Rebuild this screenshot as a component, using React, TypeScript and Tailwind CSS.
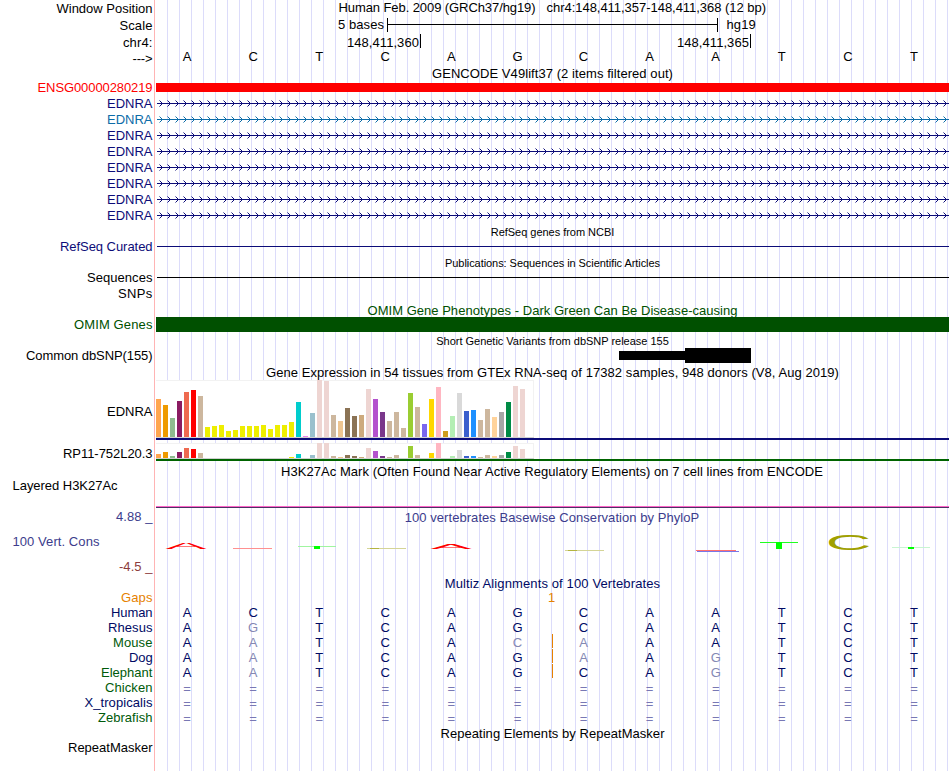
import { useLayoutEffect, useRef, useState } from 'react';
import clsx from 'clsx';

const NAVY = 'text-[#0c0c78]';
const SPECIES_BLUE = 'text-[#000a64]';

interface Label {
    text: string;
    width: number;
    className?: string;
}

// Stretches or tightens the letter spacing until the text takes up `width`
function Fit({ text, width, className }: Label) {
    const ref = useRef<HTMLSpanElement>(null);
    const [spacing, setSpacing] = useState(0);

    useLayoutEffect(() => {
        if (!ref.current) return;
        const natural = ref.current.getBoundingClientRect().width;
        setSpacing((width - natural) / text.length);
    }, []);

    return (
        <span className={clsx('block shrink-0 whitespace-pre', className)}>
            <span ref={ref} style={{ letterSpacing: `${spacing}px` }}>{text}</span>
        </span>
    );
}

const LABELS: Label[] = [
    { text: 'Window Position', width: 96, className: 'mt-px' },
    { text: 'Scale', width: 33, className: 'mt-px' },
    { text: 'chr4:', width: 29.5, className: 'mt-px' },
    { text: '--->', width: 20 },
    { text: 'ENSG00000280219', width: 115, className: 'mt-[13px] text-[#ff0000]' },
    { text: 'EDNRA', width: 45.5, className: NAVY },
    { text: 'EDNRA', width: 45.5, className: 'text-[#0c6ca8]' },
    { text: 'EDNRA', width: 45.5, className: NAVY },
    { text: 'EDNRA', width: 45.5, className: NAVY },
    { text: 'EDNRA', width: 45.5, className: NAVY },
    { text: 'EDNRA', width: 45.5, className: NAVY },
    { text: 'EDNRA', width: 45.5, className: NAVY },
    { text: 'EDNRA', width: 45.5, className: NAVY },
    { text: 'RefSeq Curated', width: 92.5, className: 'mt-[15px] text-[#0c0c78]' },
    { text: 'Sequences', width: 65.5, className: 'mt-[15px]' },
    { text: 'SNPs', width: 34.5 },
    { text: 'OMIM Genes', width: 78.5, className: 'mt-[15px] text-[#005000]' },
    { text: 'Common dbSNP(155)', width: 126.5, className: 'mt-[15px]' },
    { text: 'EDNRA', width: 45.5, className: 'mt-10' },
    { text: 'RP11-752L20.3', width: 89.5, className: 'mt-[26px]' },
    { text: 'Layered H3K27Ac', width: 105, className: 'mt-4 self-start ml-[12.5px]' },
    { text: '4.88 _', width: 36.5, className: 'mt-[15px] text-[#3c3c8c]' },
    { text: '100 Vert. Cons', width: 87, className: 'mt-[9px] self-start ml-[12.5px] text-[#3c3c8c]' },
    { text: '-4.5 _', width: 33.5, className: 'mt-[9px] text-[#8c3c3c]' },
    { text: 'Gaps', width: 31.5, className: 'mt-[15px] h-[15px] text-[#e68200]' },
    { text: 'Human', width: 41.5, className: 'h-[15px] text-[#000a64]' },
    { text: 'Rhesus', width: 44.5, className: 'h-[15px] text-[#000a64]' },
    { text: 'Mouse', width: 39.5, className: 'h-[15px] text-[#005a0a]' },
    { text: 'Dog', width: 23.5, className: 'h-[15px] text-[#000a64]' },
    { text: 'Elephant', width: 51.5, className: 'h-[15px] text-[#005a0a]' },
    { text: 'Chicken', width: 47.5, className: 'h-[15px] text-[#005a0a]' },
    { text: 'X_tropicalis', width: 68, className: 'h-[15px] text-[#000a64]' },
    { text: 'Zebrafish', width: 54.5, className: 'h-[15px] text-[#005a0a]' },
    { text: 'RepeatMasker', width: 84.5, className: 'mt-[15px]' },
];

const TISSUE_COLORS = [
    '#ffa54f', '#ee9a00', '#8fbc8f', '#8b1c62', '#ee6a50', '#ff0000', '#cdb79e',
    ...Array(13).fill('#eeee00'),
    '#00cdcd', '#ee82ee', '#9ac0cd', '#eed5d2', '#eed5d2', '#cdb79e', '#eec591', '#8b7355', '#8b7355',
    '#cdaa7d', '#eed5d2', '#b452cd', '#7a378b', '#cdb79e', '#cdb79e', '#cdb79e', '#9acd32', '#cdb79e',
    '#7a67ee', '#ffd700', '#ffb6c1', '#cd9b1d', '#b4eeb4', '#d9d9d9', '#3a5fcd', '#1e90ff', '#cdb79e',
    '#cdb79e', '#ffd39b', '#a6a6a6', '#008b45', '#eed5d2', '#eed5d2',
];

const EDNRA_EXPRESSION = [
    38, 32, 19, 36, 45, 47, 41, 10, 11, 12, 6, 7, 11, 11, 11, 12, 8, 12, 12, 15, 35, 1, 24, 57, 56, 22, 16,
    29, 21, 22, 48, 38, 25, 16, 25, 9, 44, 30, 13, 38, 50, 6, 21, 44, 26, 27, 17, 28, 20, 25, 35, 51, 48,
];

const RP11_EXPRESSION = [
    4, 6, 2, 6, 10, 9, 5, 0, 0, 0, 0, 0, 0, 0, 0, 0, 0, 0, 0, 1, 4, 0, 3, 15, 15, 2, 1,
    3, 2, 1, 10, 7, 2, 1, 3, 0, 12, 3, 0, 5, 15, 0, 2, 8, 2, 2, 1, 3, 2, 3, 6, 12, 9,
];

// Lower case marks a base that differs from human
const ALIGNMENTS = [
    { bases: 'ACTCAGCAATCT', gap: false },
    { bases: 'AgTCAGCAATCT', gap: false },
    { bases: 'AaTCAcaAATCT', gap: true },
    { bases: 'AaTCAGaAgTCT', gap: true },
    { bases: 'AaTCAGCAgTCT', gap: true },
    { bases: '============', gap: false },
    { bases: '============', gap: false },
    { bases: '============', gap: false },
];

function Title({ text, width, className }: Label) {
    return (
        <div className={clsx('flex justify-center', className)}>
            <Fit text={text} width={width} />
        </div>
    );
}

function Bases({ bases }: { bases: string }) {
    return (
        <div className="-ml-[2px] grid w-[793px] grid-cols-12 text-center">
            {bases.split('').map((base, idx) => (
                <span
                    key={idx}
                    className={clsx(
                        base === '=' && 'pt-px text-[#7878b4]',
                        base !== '=' && base !== base.toUpperCase() && 'text-[#8488b4]'
                    )}
                >
                    {base.toUpperCase()}
                </span>
            ))}
        </div>
    );
}

function Transcript({ color }: { color: string }) {
    return (
        <svg width="793" height="16" className="block" fill="none" stroke={color}>
            <path d="M1 7.5H793" />
            {Array.from({ length: 99 }, (_, i) => (
                <path key={i} d={`M${3.5 + i * 8} 4.5l3 3l-3 3`} />
            ))}
        </svg>
    );
}

function Expression({ values, className }: { values: number[]; className: string }) {
    return (
        <div
            className={clsx(
                'flex w-[378px] items-end gap-0.5 bg-white border-b border-b-[#d0d0d0] shadow-[inset_-1px_1px_0_#f2f2f2]',
                className
            )}
        >
            {values.map((value, idx) => (
                <div key={idx} className="w-[5px]" style={{ height: value, backgroundColor: TISSUE_COLORS[idx] }} />
            ))}
        </div>
    );
}

function Glyph({ base, x, y, sx, sy, fill }: { base: string; x: number; y: number; sx: number; sy: number; fill: string }) {
    return (
        <text transform={`translate(${x} ${y}) scale(${sx} ${sy})`} fontSize="13" textAnchor="middle" fill={fill}>
            {base}
        </text>
    );
}

function Conservation() {
    return (
        <svg width="793" height="50" className="block">
            <Glyph base="A" x={30} y={23} sx={4.75} sy={0.66} fill="#ff0000" />
            <rect x="77" y="22" width="39" height="1" fill="#ff9090" />
            <rect x="142" y="20" width="38" height="1" fill="#a0f5a0" />
            <rect x="158" y="20" width="6" height="3" fill="#00ff00" />
            <rect x="211" y="22" width="39" height="1" fill="#d4d496" />
            <rect x="214" y="22" width="9" height="1" fill="#b4b440" />
            <Glyph base="A" x={295} y={23} sx={4.75} sy={0.56} fill="#ff0000" />
            <rect x="409" y="24" width="39" height="1" fill="#d4d496" />
            <rect x="412" y="24" width="9" height="1" fill="#b4b440" />
            <rect x="540" y="24" width="40" height="1" fill="#ff7070" />
            <rect x="541" y="25" width="42" height="1" fill="#7878e8" />
            <rect x="604" y="16" width="38" height="1" fill="#20ff20" />
            <rect x="620" y="16" width="6" height="7" fill="#00ff00" />
            <Glyph base="C" x={692.5} y={23.8} sx={4.85} sy={1.65} fill="#a0a000" />
            <rect x="736" y="21" width="38" height="1" fill="#c8f5d2" />
            <rect x="752" y="21" width="6" height="2" fill="#00ff00" />
        </svg>
    );
}

export default function App() {
    return (
        <div className="flex h-[771px] w-[950px] overflow-hidden bg-white font-['Liberation_Sans',Arial,sans-serif] text-[13px] leading-4 text-black">
            {/* Track labels */}
            <div className="flex w-[155px] shrink-0 flex-col items-end border-r border-[#ffb4b4] pr-[1.5px]">
                {LABELS.map((label, idx) => (
                    <Fit key={idx} {...label} />
                ))}
            </div>

            {/* Tracks, over a guide line every 12px */}
            <div className="ml-px w-[793px] shrink-0 overflow-hidden bg-[repeating-linear-gradient(to_right,transparent_0_11px,#dcdcfa_11px_12px)]">
                <div className="flex pl-[182.5px]">
                    <Fit text="Human Feb. 2009 (GRCh37/hg19)" width={197} />
                    <Fit text="chr4:148,411,357-148,411,368 (12 bp)" width={219.5} className="ml-[11px]" />
                </div>
                <div className="mt-px flex h-4 pl-[182px]">
                    <Fit text="5 bases" width={46} />
                    <div className="ml-[3px] mt-px h-[14px] w-[331px] border-x border-black pt-1.5">
                        <div className="h-px bg-black" />
                    </div>
                    <Fit text="hg19" width={29.5} className="ml-[8.5px]" />
                </div>
                <div className="flex h-4 pl-[191px] pt-px">
                    <Fit text="148,411,360" width={72} className="mt-px" />
                    <div className="ml-px h-[14px] w-px bg-black" />
                    <Fit text="148,411,365" width={72} className="ml-[256px] mt-px" />
                    <div className="ml-px h-[14px] w-px bg-black" />
                </div>
                <Bases bases="ACTCAGCAATCT" />

                <Title text="GENCODE V49lift37 (2 items filtered out)" width={241} className="mt-px" />
                <div className="mt-px h-[9px] bg-[#ff0000]" />
                <div className="mt-1">
                    <Transcript color="#0c0c78" />
                    <Transcript color="#0c6ca8" />
                    {Array.from({ length: 6 }, (_, i) => (
                        <Transcript key={i} color="#0c0c78" />
                    ))}
                </div>

                <Title text="RefSeq genes from NCBI" width={123.5} className="text-[11px]" />
                <div className="ml-px mt-1.5 h-px bg-[#0c0c78]" />
                <Title text="Publications: Sequences in Scientific Articles" width={215} className="mt-2 text-[11px]" />
                <div className="ml-px mt-1.5 h-px bg-black" />

                <Title
                    text="OMIM Gene Phenotypes - Dark Green Can Be Disease-causing"
                    width={370}
                    className="mt-[25px] h-[14px] overflow-hidden text-[#005000]"
                />
                <div className="h-[15px] bg-[#005000]" />

                <Title text="Short Genetic Variants from dbSNP release 155" width={232.5} className="mt-px h-[15px] text-[11px]" />
                <div className="flex h-[15px] items-center pl-[463px]">
                    <div className="h-[9px] w-[66px] bg-black" />
                    <div className="h-[15px] w-[66px] bg-black" />
                </div>

                <Title
                    text="Gene Expression in 54 tissues from GTEx RNA-seq of 17382 samples, 948 donors (V8, Aug 2019)"
                    width={573}
                    className="mt-0.5 h-[15px]"
                />
                <Expression values={EDNRA_EXPRESSION} className="h-[58px]" />
                <div className="h-0.5 bg-[#0c0c78]" />
                <Expression values={RP11_EXPRESSION} className="mt-[3px] h-4" />
                <div className="h-0.5 bg-[#006400]" />

                <Title
                    text="H3K27Ac Mark (Often Found Near Active Regulatory Elements) on 7 cell lines from ENCODE"
                    width={542}
                    className="mt-[3px] -ml-px"
                />
                <div className="mt-[26px] h-0.5 border-b border-[#4b3264] bg-[#ff64c8]" />

                <Title
                    text="100 vertebrates Basewise Conservation by PhyloP"
                    width={294.5}
                    className="mt-0.5 -ml-px text-[#3c3c8c]"
                />
                <Conservation />

                <div className={SPECIES_BLUE}>
                    <Title text="Multiz Alignments of 100 Vertebrates" width={215.5} className="h-[14px]" />
                    <div className="h-[15px] pl-[392px] text-[#e68200]">1</div>
                    {ALIGNMENTS.map(({ bases, gap }, idx) => (
                        <div key={idx} className="relative h-[15px]">
                            <Bases bases={bases} />
                            {gap && <div className="absolute -top-px left-[396px] h-[14px] w-px bg-[#e68200]" />}
                        </div>
                    ))}
                </div>

                <Title text="Repeating Elements by RepeatMasker" width={224} className="mt-px" />
            </div>
        </div>
    );
}
